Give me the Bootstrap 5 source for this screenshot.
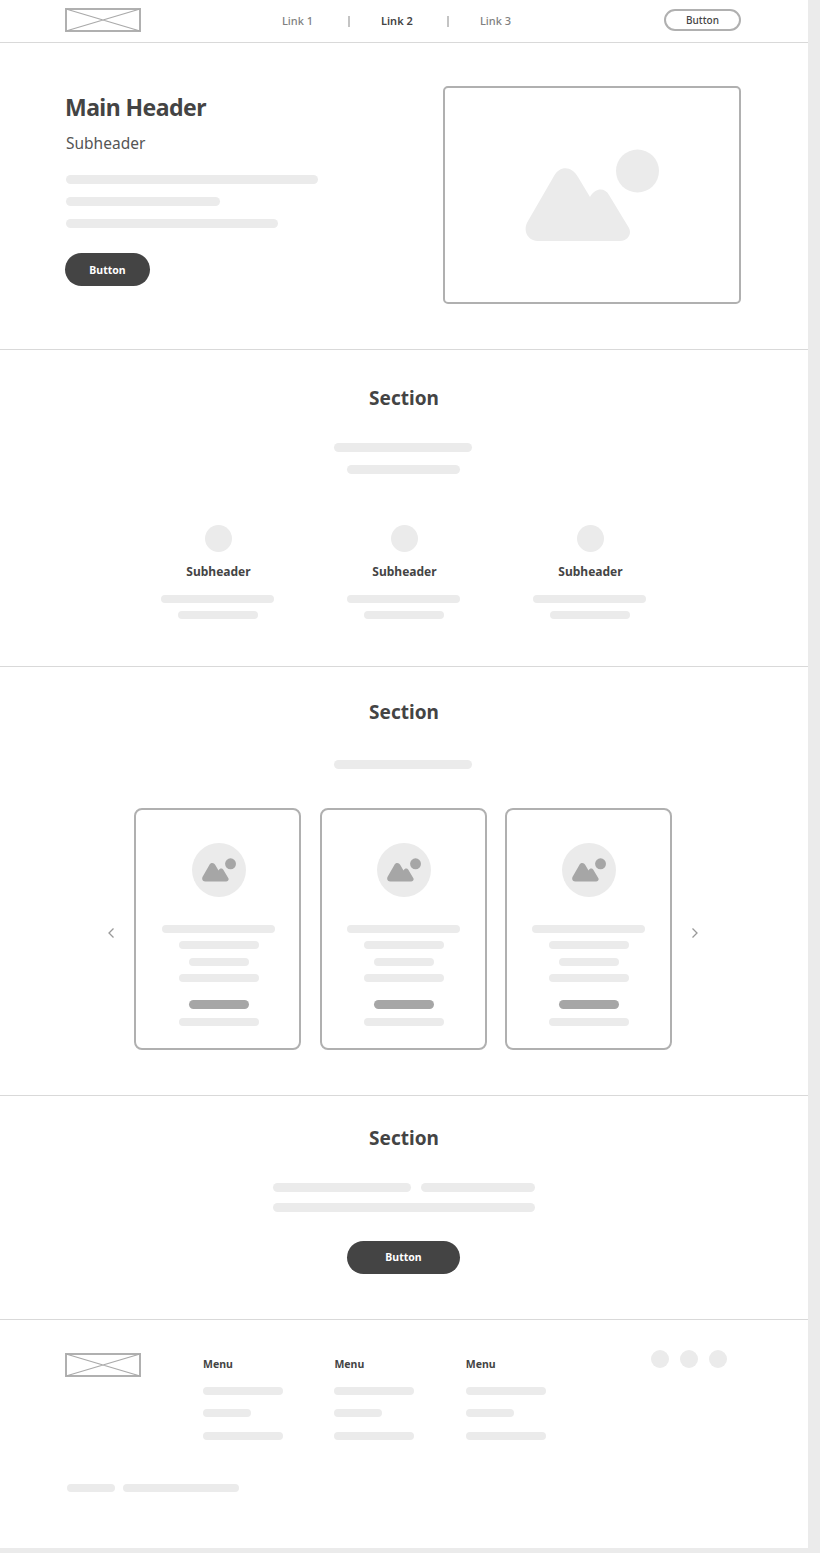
<!DOCTYPE html>
<html lang="en">
<head>
<meta charset="utf-8">
<title>Wireframe</title>
<link href="https://cdn.jsdelivr.net/npm/bootstrap@5.3.0/dist/css/bootstrap.min.css" rel="stylesheet">
<style>
html,body{background:#ebebeb;margin:0}
body{font-family:"Noto Sans","Open Sans",sans-serif;color:#444}
.sheet{width:808px;height:1548px;background:#fff;overflow:hidden}
.band{border-bottom:1px solid #d9d9d9;text-align:center}
.topbar{height:43px;padding:0 67px 0 65px}
.brandmark{display:block;width:76px;height:24px;flex:none}
.topbar .brandmark{margin-bottom:3px}
.toplinks{margin-left:141px;font-size:11px;font-weight:500;color:#808080}
.toplinks .on{color:#444;font-weight:600}
.toplinks a{color:inherit;text-decoration:none;width:31px;white-space:nowrap}
.sepbar{width:2px;height:11px;background:#c4c4c4;margin:0 31px 0 35px}
.ghostbtn{width:77px;height:22px;padding:0;border:2px solid #b0b0b0;font-size:10px;font-weight:500;color:#444;line-height:17px;margin-bottom:2px}
.hero{height:307px;padding:43px 67px 0 65px;text-align:left}
.herotitle{font-size:23px;line-height:30px;font-weight:700;margin:6px 0 10px;color:#444;letter-spacing:-.55px}
.herosub{font-size:15.500px;line-height:22px;margin:0 0 21px 1px;color:#555;font-weight:400}
.herobars{margin-left:1px}
.pic{width:298px;height:218px;border:2px solid #b0b0b0;border-radius:5px}
.pic svg{display:block;margin:61px 0 0 80px}
.bar{display:block;height:8px;border-radius:4px;background:#ebebeb}
.bar9{height:9px;border-radius:5px}
.bar.deep{background:#a6a6a6}
.w48{width:48px}.w60{width:60px}.w80{width:80px}.w113{width:113px}.w114{width:114px}.w116{width:116px}.w138{width:138px}.w154{width:154px}.w212{width:212px}.w252{width:252px}.w262{width:262px}
.mid{margin-left:auto;margin-right:auto}
.inkbtn{display:block;background:#444;color:#fff;border:0;height:33px;padding:0;font-size:10.500px;font-weight:700;line-height:33px}
.w85{width:85px;line-height:34px}
.secttitle{font-size:19px;line-height:26px;font-weight:700;margin:0;color:#444;padding-left:1px}
.s2{height:317px;padding:35px 2px 0 0}
.s3{height:429px;padding:32px 2px 0 0}
.s4{height:224px;padding:29px 1px 0 0}
.s2 .secttitle,.s3 .secttitle{padding-left:2px}
.featrow{margin-right:-1px}
.featcol{width:186px}
.dot27{width:27px;height:27px;border-radius:50%;background:#ebebeb;display:block;margin:0 0 12px 80.500px}
.feathead{font-size:12px;line-height:16px;font-weight:700;margin:0 0 15px;color:#444;padding-left:2px}
.gap8{margin-top:8px}.gap9{margin-top:9px}.gap13{margin-top:13px}.gap11{margin-top:11px}.gap14{margin-top:14px}.gap15{margin-top:15px}.gap18{margin-top:18px}
.gap25{margin-top:25px}.gap29{margin-top:29px}.gap32{margin-top:32px}.gap35{margin-top:35px}.gap51{margin-top:51px}
.gap39{margin-top:39px}
.pairbars{gap:10px}
.wirecard{width:167px;height:242px;border:2px solid #b0b0b0;border-radius:8px;padding-top:33px;background:#fff;flex:none}
.card-a{margin-left:19px;padding-left:2px}
.card-b{margin-left:19px}
.card-c{margin-left:18px;margin-right:19px}
.dot54{width:54px;height:54px;border-radius:50%;background:#ebebeb;margin:0 auto 28px;display:flex;align-items:center;justify-content:center}
.chev{width:8px;height:12px;flex:none;display:block;margin-top:8px}
.foot{height:228px;padding:30px 0 0 65px}
.footlogo{width:138px;padding-top:3px;flex:none}
.menucol{width:131.400px;flex:none}
.menuhead{font-size:10.500px;line-height:14px;font-weight:700;margin:7px 0 16px;color:#444}
.socials{margin-left:53.800px;gap:11px}
.dot18{width:18px;height:18px;border-radius:50%;background:#ebebeb}
.footlegal{margin:44px 0 0 2px;gap:8px}
</style>
</head>
<body>
<svg width="0" height="0" class="position-absolute">
<symbol id="scene" viewBox="0 0 134 93">
<path d="M13 92H95C103 92 107 85 104 79L84 46C80 39 71 38 65 48L53 28C47 17 35 16 29 27L3 72C-3 82 3 92 13 92Z"/>
<circle cx="112.500" cy="22" r="21.500"/>
</symbol>
<symbol id="mark" viewBox="0 0 76 24">
<rect x="1" y="1" width="74" height="22" fill="none" stroke="#b0b0b0" stroke-width="2"/>
<path d="M1 1L75 23M75 1L1 23" fill="none" stroke="#aaa" stroke-width="1.300"/>
</symbol>
</svg>
<div class="sheet">
<nav class="band topbar d-flex align-items-center">
<svg class="brandmark"><use href="#mark"/></svg>
<div class="toplinks d-flex align-items-center">
<a href="#">Link 1</a><span class="sepbar"></span><a href="#" class="on">Link 2</a><span class="sepbar"></span><a href="#">Link 3</a>
</div>
<button type="button" class="btn ghostbtn rounded-pill ms-auto">Button</button>
</nav>

<header class="band hero d-flex justify-content-between align-items-start">
<div>
<h1 class="herotitle">Main Header</h1>
<h2 class="herosub">Subheader</h2>
<div class="herobars">
<span class="bar bar9 w252"></span>
<span class="bar bar9 w154 gap13"></span>
<span class="bar bar9 w212 gap13"></span>
</div>
<button type="button" class="btn inkbtn rounded-pill w85 gap25">Button</button>
</div>
<div class="pic"><svg width="134" height="93" fill="#ebebeb"><use href="#scene"/></svg></div>
</header>

<section class="band s2">
<h2 class="secttitle">Section</h2>
<span class="bar bar9 w138 mid gap32"></span>
<span class="bar bar9 w113 mid gap13"></span>
<div class="d-flex justify-content-center featrow gap51">
<div class="featcol"><span class="dot27"></span><h3 class="feathead">Subheader</h3><span class="bar w113 mid"></span><span class="bar w80 mid gap8"></span></div>
<div class="featcol"><span class="dot27"></span><h3 class="feathead">Subheader</h3><span class="bar w113 mid"></span><span class="bar w80 mid gap8"></span></div>
<div class="featcol"><span class="dot27"></span><h3 class="feathead">Subheader</h3><span class="bar w113 mid"></span><span class="bar w80 mid gap8"></span></div>
</div>
</section>

<section class="band s3">
<h2 class="secttitle">Section</h2>
<span class="bar bar9 w138 mid gap35"></span>
<div class="d-flex justify-content-center align-items-center gap39">
<svg class="chev" viewBox="0 0 8 12"><path d="M6.500 1.500L2 6l4.500 4.500" fill="none" stroke="#999" stroke-width="1.300"/></svg>
<div class="wirecard card-a">
<div class="dot54"><svg width="34" height="24" fill="#a6a6a6"><use href="#scene"/></svg></div>
<span class="bar w113 mid"></span><span class="bar w80 mid gap8"></span><span class="bar w60 mid gap9"></span><span class="bar w80 mid gap8"></span>
<span class="bar bar9 deep w60 mid gap18"></span><span class="bar w80 mid gap9"></span>
</div>
<div class="wirecard card-b">
<div class="dot54"><svg width="34" height="24" fill="#a6a6a6"><use href="#scene"/></svg></div>
<span class="bar w113 mid"></span><span class="bar w80 mid gap8"></span><span class="bar w60 mid gap9"></span><span class="bar w80 mid gap8"></span>
<span class="bar bar9 deep w60 mid gap18"></span><span class="bar w80 mid gap9"></span>
</div>
<div class="wirecard card-c">
<div class="dot54"><svg width="34" height="24" fill="#a6a6a6"><use href="#scene"/></svg></div>
<span class="bar w113 mid"></span><span class="bar w80 mid gap8"></span><span class="bar w60 mid gap9"></span><span class="bar w80 mid gap8"></span>
<span class="bar bar9 deep w60 mid gap18"></span><span class="bar w80 mid gap9"></span>
</div>
<svg class="chev" viewBox="0 0 8 12"><path d="M1.500 1.500L6 6l-4.500 4.500" fill="none" stroke="#999" stroke-width="1.300"/></svg>
</div>
</section>

<section class="band s4">
<h2 class="secttitle">Section</h2>
<div class="d-flex justify-content-center pairbars gap32"><span class="bar bar9 w138"></span><span class="bar bar9 w114"></span></div>
<span class="bar bar9 w262 mid gap11"></span>
<button type="button" class="btn inkbtn rounded-pill w113 mid gap29">Button</button>
</section>

<footer class="foot">
<div class="d-flex">
<div class="footlogo"><svg class="brandmark"><use href="#mark"/></svg></div>
<div class="menucol"><h4 class="menuhead">Menu</h4><span class="bar w80"></span><span class="bar w48 gap14"></span><span class="bar w80 gap15"></span></div>
<div class="menucol"><h4 class="menuhead">Menu</h4><span class="bar w80"></span><span class="bar w48 gap14"></span><span class="bar w80 gap15"></span></div>
<div class="menucol"><h4 class="menuhead">Menu</h4><span class="bar w80"></span><span class="bar w48 gap14"></span><span class="bar w80 gap15"></span></div>
<div class="socials d-flex"><span class="dot18"></span><span class="dot18"></span><span class="dot18"></span></div>
</div>
<div class="footlegal d-flex"><span class="bar w48"></span><span class="bar w116"></span></div>
</footer>
</div>
<script src="https://cdn.jsdelivr.net/npm/bootstrap@5.3.0/dist/js/bootstrap.bundle.min.js"></script>
</body>
</html>
